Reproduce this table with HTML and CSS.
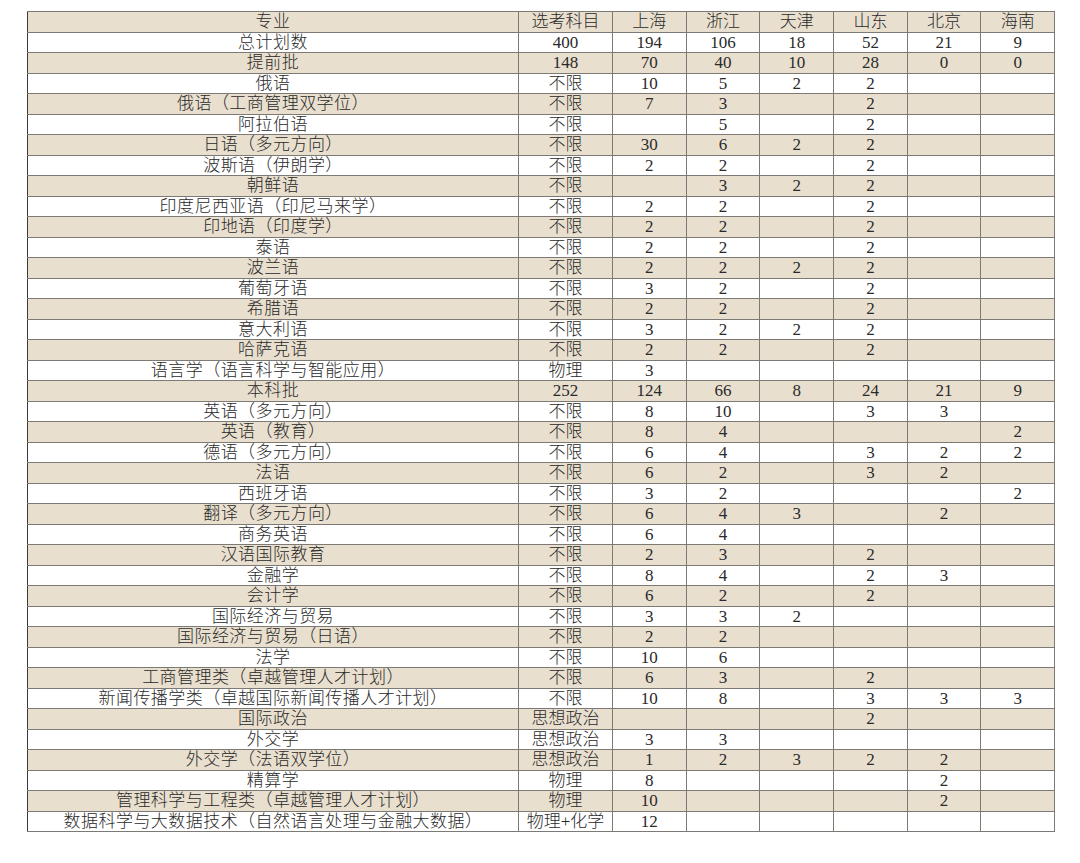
FILE: index.html
```html
<!DOCTYPE html>
<html lang="zh">
<head>
<meta charset="utf-8">
<title>招生计划</title>
<link rel="stylesheet" href="styles.css">
</head>
<body>
<table class="plan">
<colgroup>
<col class="c-major"><col class="c-subj"><col class="c-p"><col class="c-p"><col class="c-p"><col class="c-p"><col class="c-p"><col class="c-p">
</colgroup>
<tbody>
<tr><td>专业</td><td>选考科目</td><td>上海</td><td>浙江</td><td>天津</td><td>山东</td><td>北京</td><td>海南</td></tr>
<tr><td>总计划数</td><td>400</td><td>194</td><td>106</td><td>18</td><td>52</td><td>21</td><td>9</td></tr>
<tr><td>提前批</td><td>148</td><td>70</td><td>40</td><td>10</td><td>28</td><td>0</td><td>0</td></tr>
<tr><td>俄语</td><td>不限</td><td>10</td><td>5</td><td>2</td><td>2</td><td></td><td></td></tr>
<tr><td>俄语（工商管理双学位）</td><td>不限</td><td>7</td><td>3</td><td></td><td>2</td><td></td><td></td></tr>
<tr><td>阿拉伯语</td><td>不限</td><td></td><td>5</td><td></td><td>2</td><td></td><td></td></tr>
<tr><td>日语（多元方向）</td><td>不限</td><td>30</td><td>6</td><td>2</td><td>2</td><td></td><td></td></tr>
<tr><td>波斯语（伊朗学）</td><td>不限</td><td>2</td><td>2</td><td></td><td>2</td><td></td><td></td></tr>
<tr><td>朝鲜语</td><td>不限</td><td></td><td>3</td><td>2</td><td>2</td><td></td><td></td></tr>
<tr><td>印度尼西亚语（印尼马来学）</td><td>不限</td><td>2</td><td>2</td><td></td><td>2</td><td></td><td></td></tr>
<tr><td>印地语（印度学）</td><td>不限</td><td>2</td><td>2</td><td></td><td>2</td><td></td><td></td></tr>
<tr><td>泰语</td><td>不限</td><td>2</td><td>2</td><td></td><td>2</td><td></td><td></td></tr>
<tr><td>波兰语</td><td>不限</td><td>2</td><td>2</td><td>2</td><td>2</td><td></td><td></td></tr>
<tr><td>葡萄牙语</td><td>不限</td><td>3</td><td>2</td><td></td><td>2</td><td></td><td></td></tr>
<tr><td>希腊语</td><td>不限</td><td>2</td><td>2</td><td></td><td>2</td><td></td><td></td></tr>
<tr><td>意大利语</td><td>不限</td><td>3</td><td>2</td><td>2</td><td>2</td><td></td><td></td></tr>
<tr><td>哈萨克语</td><td>不限</td><td>2</td><td>2</td><td></td><td>2</td><td></td><td></td></tr>
<tr><td>语言学（语言科学与智能应用）</td><td>物理</td><td>3</td><td></td><td></td><td></td><td></td><td></td></tr>
<tr><td>本科批</td><td>252</td><td>124</td><td>66</td><td>8</td><td>24</td><td>21</td><td>9</td></tr>
<tr><td>英语（多元方向）</td><td>不限</td><td>8</td><td>10</td><td></td><td>3</td><td>3</td><td></td></tr>
<tr><td>英语（教育）</td><td>不限</td><td>8</td><td>4</td><td></td><td></td><td></td><td>2</td></tr>
<tr><td>德语（多元方向）</td><td>不限</td><td>6</td><td>4</td><td></td><td>3</td><td>2</td><td>2</td></tr>
<tr><td>法语</td><td>不限</td><td>6</td><td>2</td><td></td><td>3</td><td>2</td><td></td></tr>
<tr><td>西班牙语</td><td>不限</td><td>3</td><td>2</td><td></td><td></td><td></td><td>2</td></tr>
<tr><td>翻译（多元方向）</td><td>不限</td><td>6</td><td>4</td><td>3</td><td></td><td>2</td><td></td></tr>
<tr><td>商务英语</td><td>不限</td><td>6</td><td>4</td><td></td><td></td><td></td><td></td></tr>
<tr><td>汉语国际教育</td><td>不限</td><td>2</td><td>3</td><td></td><td>2</td><td></td><td></td></tr>
<tr><td>金融学</td><td>不限</td><td>8</td><td>4</td><td></td><td>2</td><td>3</td><td></td></tr>
<tr><td>会计学</td><td>不限</td><td>6</td><td>2</td><td></td><td>2</td><td></td><td></td></tr>
<tr><td>国际经济与贸易</td><td>不限</td><td>3</td><td>3</td><td>2</td><td></td><td></td><td></td></tr>
<tr><td>国际经济与贸易（日语）</td><td>不限</td><td>2</td><td>2</td><td></td><td></td><td></td><td></td></tr>
<tr><td>法学</td><td>不限</td><td>10</td><td>6</td><td></td><td></td><td></td><td></td></tr>
<tr><td>工商管理类（卓越管理人才计划）</td><td>不限</td><td>6</td><td>3</td><td></td><td>2</td><td></td><td></td></tr>
<tr><td>新闻传播学类（卓越国际新闻传播人才计划）</td><td>不限</td><td>10</td><td>8</td><td></td><td>3</td><td>3</td><td>3</td></tr>
<tr><td>国际政治</td><td>思想政治</td><td></td><td></td><td></td><td>2</td><td></td><td></td></tr>
<tr><td>外交学</td><td>思想政治</td><td>3</td><td>3</td><td></td><td></td><td></td><td></td></tr>
<tr><td>外交学（法语双学位）</td><td>思想政治</td><td>1</td><td>2</td><td>3</td><td>2</td><td>2</td><td></td></tr>
<tr><td>精算学</td><td>物理</td><td>8</td><td></td><td></td><td></td><td>2</td><td></td></tr>
<tr><td>管理科学与工程类（卓越管理人才计划）</td><td>物理</td><td>10</td><td></td><td></td><td></td><td>2</td><td></td></tr>
<tr><td>数据科学与大数据技术（自然语言处理与金融大数据）</td><td>物理+化学</td><td>12</td><td></td><td></td><td></td><td></td><td></td></tr>
</tbody>
</table>
</body>
</html>
```
FILE: styles.css
```css
html, body {
  margin: 0;
  padding: 0;
  background: #ffffff;
}
body {
  padding: 11px 0 0 27px;
  font-family: "Liberation Serif", "Noto Sans CJK SC", serif;
  color: #2a2a2a;
}
.plan {
  border-collapse: collapse;
  table-layout: fixed;
  width: 1027px;
}
.c-major { width: 491px; }
.c-subj { width: 94px; }
.c-p { width: 73.7px; }
.plan td {
  border: 1px solid #7d7a75;
  height: 19.5px;
  padding: 0;
  text-align: center;
  vertical-align: middle;
  font-size: 17px;
  line-height: 19px;
  font-weight: 300;
  white-space: nowrap;
  overflow: hidden;
}
.plan td:first-child {
  letter-spacing: 0.45px;
  border-left-color: #3a3a3a;
}
.plan tr:nth-child(odd) td {
  background: #e9dfcf;
}
```
